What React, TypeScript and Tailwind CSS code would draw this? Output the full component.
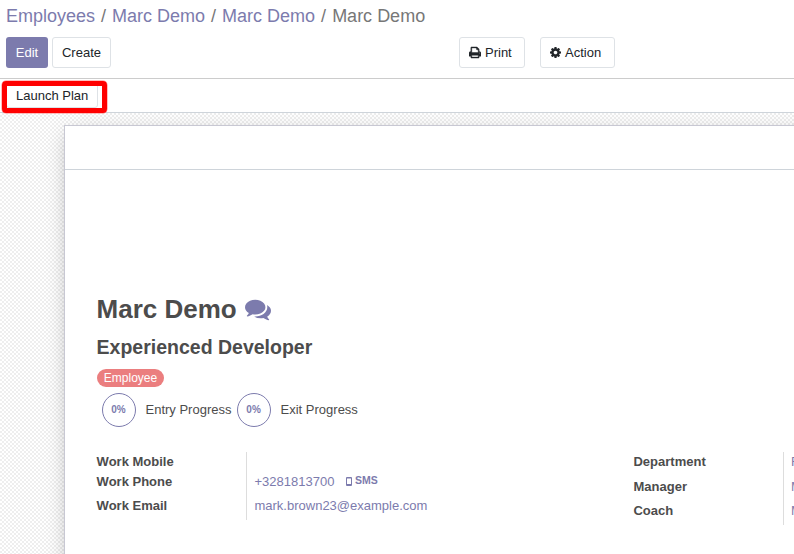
import React from "react";

const PRINT =
  "M384 1536h896v-256h-896v256zm0-640h896v-384h-160q-40 0-68-28t-28-68v-160h-640v640zm1152 64q0-26-19-45t-45-19-45 19-19 45 19 45 45 19 45-19 19-45zm128 0v416q0 13-9.5 22.5t-22.5 9.5h-224v160q0 40-28 68t-68 28h-960q-40 0-68-28t-28-68v-160h-224q-13 0-22.5-9.5t-9.5-22.5v-416q0-79 56.5-135.500t135.500-56.500h64v-544q0-40 28-68t68-28h672q40 0 88 20t76 48l152 152q28 28 48 76t20 88v256h64q79 0 135.500 56.500t56.500 135.500z";
const COG =
  "M1024 896q0-106-75-181t-181-75-181 75-75 181 75 181 181 75 181-75 75-181zm512-109v222q0 12-8 23t-20 13l-185 28q-19 54-39 91 35 50 107 138 10 12 10 25t-9 23q-27 37-99 108t-94 71q-12 0-26-9l-138-108q-44 23-91 38-16 136-29 186-7 28-36 28h-222q-14 0-24.5-8.5t-11.5-21.5l-28-184q-49-16-90-37l-141 107q-10 9-25 9-14 0-25-11-126-114-165-168-7-10-7-23 0-12 8-23 15-21 51-66.500t54-70.500q-27-50-41-99l-183-27q-13-2-21-12.500t-8-23.500v-222q0-12 8-23t19-13l186-28q14-46 39-92-40-57-107-138-10-12-10-24 0-10 9-23 26-36 98.500-107.500t94.500-71.500q13 0 26 10l138 107q44-23 91-38 16-136 29-186 7-28 36-28h222q14 0 24.500 8.500t11.500 21.500l28 184q49 16 90 37l142-107q9-9 24-9 13 0 25 10 129 119 165 170 7 8 7 22 0 12-8 23-15 21-51 66.500t-54 70.500q26 50 41 98l183 28q13 2 21 12.500t8 23.500z";
const COMMENTS =
  "M1408 768q0 139-94 257t-256.500 186.500-353.500 68.500q-86 0-176-16-124 88-278 128-36 9-86 16h-3q-11 0-20.500-8t-11.500-21q-1-3-1-6.500t.5-6.500 2-6l2.500-5 3.500-5.500 4-5 4.500-5 4-4.500q5-6 23-25t26-29.500 22.500-29 25-38.500 20.500-44q-124-72-195-177t-71-224q0-139 94-257t256.500-186.500 353.500-68.500 353.500 68.500 256.500 186.500 94 257zm384 256q0 120-71 224.500t-195 176.500q10 24 20.500 44t25 38.500 22.500 29 26 29.500 23 25q1 1 4 4.500t4.500 5 4 5 3.500 5.500l2.500 5 2 6 .5 6.500-1 6.500q-3 14-13 22t-22 7q-50-7-86-16-154-40-278-128-90 16-176 16-271 0-472-132 58 4 88 4 161 0 309-45t264-129q125-92 192-212t67-254q0-77-23-152 129 71 204 178t75 230z";

function Glyph({ d, width, className }: { d: string; width: number; className: string }) {
  return (
    <svg viewBox={`0 0 ${width} 1792`} className={className} fill="currentColor" aria-hidden="true">
      <path d={d} />
    </svg>
  );
}

function Crumb({ children }: { children: string }) {
  return (
    <>
      <a className="text-[#7c7bad]">{children}</a>
      <span className="px-[6px]">/</span>
    </>
  );
}

function Progress({ label }: { label: string }) {
  return (
    <div className="flex items-center">
      <div className="flex size-[34px] items-center justify-center rounded-full border border-[#7c7bad] pb-px pr-px text-[10px] font-bold text-[#7c7bad]">
        0%
      </div>
      <span className="ml-[9.500px]">{label}</span>
    </div>
  );
}

const BUTTON = "flex items-center rounded-[3px] border border-[#dee2e6] bg-white text-[#212529]";

export default function App() {
  return (
    <div className="flex h-[554px] w-[794px] flex-col overflow-hidden bg-white font-['Liberation_Sans',Arial,sans-serif] text-[13px] leading-[20px] text-[#4c4c4c]">
      <header className="h-[79px] shrink-0 border-b border-[#cccccc] px-[6px] pt-[2px]">
        <nav className="flex h-[27px] items-center text-[18px] text-[#777777]">
          <Crumb>Employees</Crumb>
          <Crumb>Marc Demo</Crumb>
          <Crumb>Marc Demo</Crumb>
          <span>Marc Demo</span>
        </nav>
        <div className="mt-[8px] flex h-[31px]">
          <button className="flex w-[42px] items-center justify-center rounded-[3px] bg-[#7c7bad] text-white">Edit</button>
          <button className={`${BUTTON} ml-1 w-[59px] justify-center`}>Create</button>
          <button className={`${BUTTON} ml-[348px] w-[66px] pl-[9px]`}>
            <Glyph d={PRINT} width={1664} className="mr-1 h-[13px] w-[12px] stroke-current stroke-[60]" />
            Print
          </button>
          <button className={`${BUTTON} ml-[15px] w-[75px] pl-[9px]`}>
            <Glyph d={COG} width={1536} className="mr-1 h-[13px] w-[11px]" />
            Action
          </button>
        </div>
      </header>

      <div className="relative flex h-[34px] shrink-0 border-b border-[#ced4da] pl-[6px]">
        <button className={`${BUTTON} mt-[2px] h-[27px] w-[92px] pl-[9px] pt-[2px]`}>Launch Plan</button>
        <div className="absolute left-[2px] top-[2px] h-[32px] w-[105px] rounded-[4px] border-[5px] border-[#ff0000] shadow-[0_0_0_0.5px_#ff8080]" />
      </div>

      <main className="min-h-0 flex-1 bg-white bg-[conic-gradient(#eeeeee_25%,#ffffff_0_50%,#eeeeee_0_75%,#ffffff_0)] bg-[length:4px_4px] pl-[64px] pt-[12px]">
        <section className="h-[480px] w-[800px] border border-[#c8c8d3] bg-white shadow-[0_5px_20px_-5px_rgba(0,0,0,0.3)]">
          <div className="h-[44px] border-b border-[#ced4da]" />
          <div className="pl-[31.600px] pt-[121px]">
            <h1 className="flex h-[36px] items-center text-[26px] font-bold">
              Marc Demo
              <Glyph d={COMMENTS} width={1792} className="-mt-px ml-[8px] size-[26px] text-[#7c7bad]" />
            </h1>
            <h2 className="mt-[8px] flex h-[24px] items-center text-[19.500px] font-bold">Experienced Developer</h2>
            <div className="mt-[10px] flex h-[18px] w-[67px] items-center justify-center rounded-full bg-[#eb7e7f] pl-[0.800px] text-[12px] text-white">
              Employee
            </div>
            <div className="ml-[5.400px] mt-[6px] flex gap-[5.600px]">
              <Progress label="Entry Progress" />
              <Progress label="Exit Progress" />
            </div>
            <div className="mt-[25px] flex">
              <div className="w-[149.400px] font-bold">
                <div className="h-[20px]">Work Mobile</div>
                <div className="h-[24px]">Work Phone</div>
                <div>Work Email</div>
              </div>
              <div className="h-[68px] w-[387px] border-l border-[#dddddd] pl-[7.500px] text-[#7c7bad]">
                <div className="mt-[20px] flex h-[24px]">
                  +3281813700
                  <svg viewBox="0 0 6 9" className="ml-[12px] mt-[5px] h-[9px] w-[6px]" fill="currentColor" fillRule="evenodd" aria-hidden="true">
                    <path d="M1 0h4a1 1 0 0 1 1 1v7a1 1 0 0 1-1 1H1a1 1 0 0 1-1-1V1a1 1 0 0 1 1-1zM1 1.500v5.500h4V1.500z" />
                  </svg>
                  <span className="ml-[2.500px] mt-[-2px] text-[10.500px] font-bold">SMS</span>
                </div>
                <div>mark.brown23@example.com</div>
              </div>
              <div className="w-[150px] pl-[0.500px] font-bold">
                <div className="h-[25px]">Department</div>
                <div className="h-[24px]">Manager</div>
                <div>Coach</div>
              </div>
              <div className="h-[73px] border-l border-[#dddddd] pl-[7px] text-[#7c7bad]">
                <div className="h-[25px]">R</div>
                <div className="h-[24px]">M</div>
                <div>M</div>
              </div>
            </div>
          </div>
        </section>
      </main>
    </div>
  );
}
